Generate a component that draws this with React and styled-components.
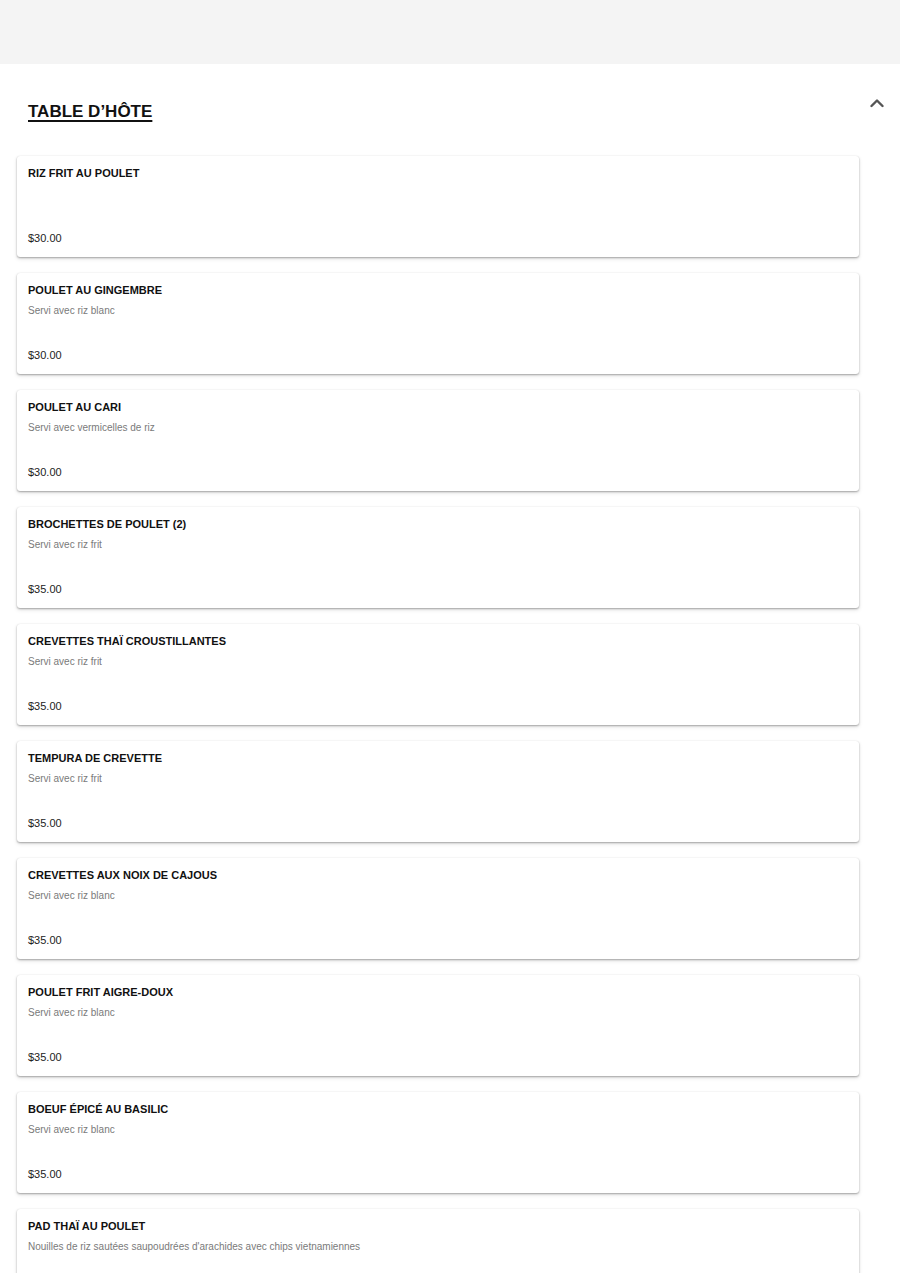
import styled, { createGlobalStyle } from "styled-components";

const GlobalStyle = createGlobalStyle`
  body {
    margin: 0;
    background: #fff;
    font-family: "Liberation Sans", Arial, sans-serif;
  }
`;

const TopBand = styled.div`
  height: 64px;
  background: #f4f4f4;
`;

const Section = styled.section`
  display: flex;
  flex-direction: column;
`;

const TitleRow = styled.div`
  display: flex;
  justify-content: space-between;
  align-items: flex-start;
  padding: 38px 16px 0 28px;
`;

const Title = styled.h2`
  margin: 0;
  font-size: 17px;
  line-height: 20px;
  font-weight: 700;
  color: #111;
  text-decoration: underline;
  text-decoration-thickness: 2px;
  text-underline-offset: 3px;
`;

const Toggle = styled.button`
  border: 0;
  background: none;
  padding: 0;
  margin-top: -6px;
  width: 14px;
  height: 14px;
  display: flex;
  align-items: center;
  justify-content: center;
  color: #555;
  cursor: pointer;
`;

const ItemList = styled.div`
  display: flex;
  flex-direction: column;
  gap: 16px;
  padding: 34px 41px 24px 17px;
`;

const Card = styled.div`
  box-sizing: border-box;
  height: 101px;
  display: flex;
  flex-direction: column;
  padding: 11px 11px 12px;
  background: #fff;
  border-radius: 3px;
  box-shadow: 0 1px 2px rgba(0, 0, 0, 0.3), 0 2px 4px rgba(0, 0, 0, 0.1),
    0 0 1px rgba(0, 0, 0, 0.1);
`;

const Name = styled.div`
  font-size: 11px;
  line-height: 13px;
  font-weight: 700;
  color: #111;
`;

const Desc = styled.div`
  margin-top: 8px;
  font-size: 10px;
  line-height: 12px;
  color: #7a7a7a;
`;

const Price = styled.div`
  margin-top: auto;
  font-size: 11px;
  line-height: 14px;
  color: #222;
`;

const items = [
  { name: "RIZ FRIT AU POULET", desc: "", price: "$30.00" },
  { name: "POULET AU GINGEMBRE", desc: "Servi avec riz blanc", price: "$30.00" },
  { name: "POULET AU CARI", desc: "Servi avec vermicelles de riz", price: "$30.00" },
  { name: "BROCHETTES DE POULET (2)", desc: "Servi avec riz frit", price: "$35.00" },
  { name: "CREVETTES THAÏ CROUSTILLANTES", desc: "Servi avec riz frit", price: "$35.00" },
  { name: "TEMPURA DE CREVETTE", desc: "Servi avec riz frit", price: "$35.00" },
  { name: "CREVETTES AUX NOIX DE CAJOUS", desc: "Servi avec riz blanc", price: "$35.00" },
  { name: "POULET FRIT AIGRE-DOUX", desc: "Servi avec riz blanc", price: "$35.00" },
  { name: "BOEUF ÉPICÉ AU BASILIC", desc: "Servi avec riz blanc", price: "$35.00" },
  {
    name: "PAD THAÏ AU POULET",
    desc: "Nouilles de riz sautées saupoudrées d'arachides avec chips vietnamiennes",
    price: "$35.00",
  },
];

export default function App() {
  return (
    <>
      <GlobalStyle />
      <TopBand />
      <Section>
        <TitleRow>
          <Title>TABLE D’HÔTE</Title>
          <Toggle aria-label="Réduire">
            <svg width="14" height="10" viewBox="0 0 14 10" fill="none">
              <path d="M1.5 8L7 2.5L12.5 8" stroke="currentColor" strokeWidth="2.4" strokeLinecap="round" strokeLinejoin="round" />
            </svg>
          </Toggle>
        </TitleRow>
        <ItemList>
          {items.map((item) => (
            <Card key={item.name}>
              <Name>{item.name}</Name>
              {item.desc && <Desc>{item.desc}</Desc>}
              <Price>{item.price}</Price>
            </Card>
          ))}
        </ItemList>
      </Section>
    </>
  );
}
